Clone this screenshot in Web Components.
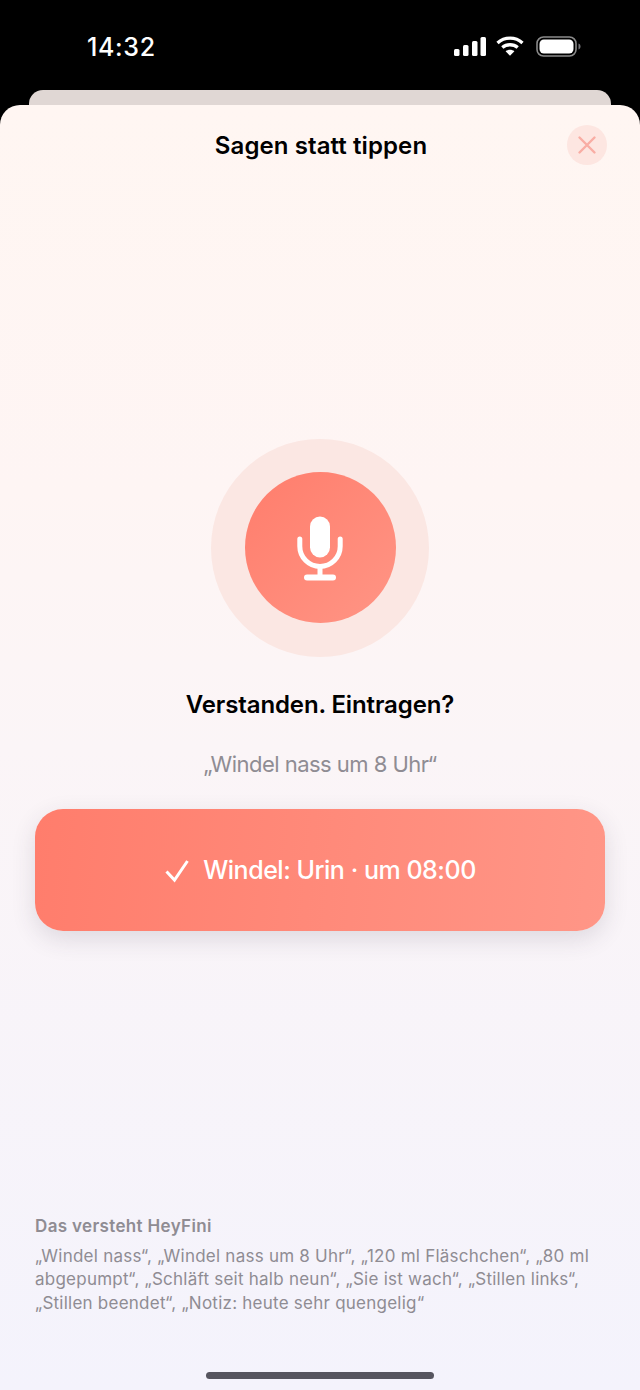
<!DOCTYPE html>
<html lang="de"><head><meta charset="utf-8"><title>Sagen statt tippen</title>
<style>
html,body{margin:0;padding:0;background:#000;}
body{width:640px;height:1390px;overflow:hidden;font-family:Inter,"Liberation Sans",sans-serif;}
</style></head><body>
<voice-screen>
  <status-bar slot="status" time="14:32"></status-bar>
  <voice-sheet slot="sheet" heading="Sagen statt tippen">
    <mic-orb></mic-orb>
    <span slot="prompt">Verstanden. Eintragen?</span>
    <span slot="quote">„Windel nass um 8 Uhr“</span>
    <confirm-card slot="card">Windel: Urin · um 08:00</confirm-card>
    <hint-block slot="hint" title="Das versteht HeyFini">„Windel nass“, „Windel nass um 8 Uhr“, „120 ml Fläschchen“, „80 ml abgepumpt“, „Schläft seit halb neun“, „Sie ist wach“, „Stillen links“, „Stillen beendet“, „Notiz: heute sehr quengelig“</hint-block>
  </voice-sheet>
</voice-screen>
<script>
function def(name, html, init){
  customElements.define(name, class extends HTMLElement{
    constructor(){super();this.attachShadow({mode:'open'}).innerHTML=html;}
    connectedCallback(){ if(init) init(this); }
  });
}
def('voice-screen',`<style>
:host{display:flex;flex-direction:column;width:640px;height:1390px;background:#000}
.peek{height:15px;margin:0 29px;background:#e0d7d4;border-radius:14px 14px 0 0;flex:none}
::slotted([slot=sheet]){flex:1}
</style><slot name="status"></slot><div class="peek"></div><slot name="sheet"></slot>`);

def('status-bar',`<style>
:host{display:flex;align-items:center;justify-content:space-between;height:90px;flex:none;box-sizing:border-box;padding:0 59px 0 87px;color:#fff}
.t{font:500 25px/30px Inter,"Liberation Sans",sans-serif;letter-spacing:.65px;margin-top:3px}
.i{display:flex;align-items:center;margin-top:2px}
svg{display:block}
.w{margin:0 12px 0 10px}
</style><span class="t"></span><div class="i">
<svg width="32" height="19" viewBox="0 0 32 19" fill="#fff"><rect x="0" y="12" width="5.500" height="7" rx="1.500"/><rect x="9" y="8" width="5.500" height="11" rx="1.500"/><rect x="18" y="4" width="5.500" height="15" rx="1.500"/><rect x="26.500" y="0" width="5.500" height="19" rx="1.500"/></svg>
<svg class="w" width="28" height="20" viewBox="0 0 28 20" fill="none" stroke="#fff" stroke-width="3.300"><path d="M1.500 7C8.500 .6 19.500 .6 26.500 7"/><path d="M6.300 11.600c4.400-3.800 11-3.800 15.400 0"/><path d="M14 19.800l-4.400-4.600c2.600-2 6.200-2 8.800 0z" fill="#fff" stroke="none"/></svg>
<svg width="45" height="21" viewBox="0 0 45 21" fill="none"><rect x="1" y="1" width="39" height="19" rx="6.500" stroke="#8a8a8a" stroke-width="1.600"/><rect x="3.500" y="3.500" width="34" height="14" rx="4.400" fill="#fff"/><path d="M42.500 7.500v6c1.300-.4 2-1.600 2-3s-.7-2.600-2-3z" fill="#77767a"/></svg>
</div>`, el=>{el.shadowRoot.querySelector('.t').textContent=el.getAttribute('time');});

def('voice-sheet',`<style>
:host{display:flex;flex-direction:column;box-sizing:border-box;border-radius:20px 20px 0 0;background:linear-gradient(180deg,#fff6f2 0%,#fef5f4 30%,#fbf5f7 50%,#f4f3fc 100%);color:#000;min-height:0}
header{display:grid;grid-template-columns:1fr auto 1fr;align-items:center;padding:20px 33px 0 35px;height:40px}
h1{grid-column:2;margin:2px 0 0;font:600 24px/32px Inter,"Liberation Sans",sans-serif;letter-spacing:.09px;white-space:nowrap}
.x{grid-column:3;justify-self:end;width:40px;height:40px;border-radius:50%;background:#fde6e1;display:flex;align-items:center;justify-content:center}
.main{display:flex;flex-direction:column;align-items:center;padding-top:274px}
.p{margin-top:32px;font:600 24px/32px Inter,"Liberation Sans",sans-serif;letter-spacing:-.12px}
.q{margin-top:29px;font:400 22px/28px Inter,"Liberation Sans",sans-serif;color:#8f8c93;letter-spacing:-.53px}
.c{align-self:stretch;margin:31px 35px 0}
.f{margin-top:auto;padding:0 35px}
.home{width:228px;height:7px;border-radius:4px;background:#56555f;margin:57px auto 11px}
</style>
<header><h1></h1><div class="x"><svg width="20" height="20" viewBox="0 0 20 20" fill="none" stroke="#f9ada4" stroke-width="2.400" stroke-linecap="round"><path d="M2.500 2.500l15 15M17.500 2.500l-15 15"/></svg></div></header>
<div class="main"><slot></slot>
<div class="p"><slot name="prompt"></slot></div>
<div class="q"><slot name="quote"></slot></div>
<div class="c"><slot name="card"></slot></div></div>
<div class="f"><slot name="hint"></slot></div>
<div class="home"></div>`, el=>{
  el.shadowRoot.querySelector('h1').textContent=el.getAttribute('heading');
});

def('mic-orb',`<style>
:host{display:flex;width:218px;height:218px;border-radius:50%;background:#fbe7e3;align-items:center;justify-content:center}
.o{width:151px;height:151px;margin-top:-1px;border-radius:50%;background:linear-gradient(135deg,#ff7d6c,#ff9585);display:flex;align-items:center;justify-content:center}
svg{display:block}
</style><div class="o"><svg width="48" height="66" viewBox="0 0 48 66"><rect x="14" y="1.500" width="20" height="41" rx="10" fill="#fff"/><path d="M3.800 24v7.300a20.200 20.200 0 0 0 40.400 0V24" fill="none" stroke="#fff" stroke-width="5" stroke-linecap="round"/><path d="M24 51v9" stroke="#fff" stroke-width="5"/><rect x="8" y="59.500" width="32" height="6" rx="3" fill="#fff"/></svg></div>`);

def('confirm-card',`<style>
:host{display:flex;align-items:center;justify-content:center;gap:15px;height:122px;border-radius:28px;background:linear-gradient(95deg,#ff7d6c,#ff9687);color:#fff;box-shadow:0 8px 24px rgba(60,50,70,.14);font:500 25px/32px Inter,"Liberation Sans",sans-serif;letter-spacing:-.47px}
svg{display:block;margin-top:2px;overflow:visible}
</style><svg width="24" height="22" viewBox="0 0 24 22" fill="none" stroke="#fff" stroke-width="3"><path d="M2.500 11.500l8 8.500L23.500 1"/></svg><slot></slot>`);

def('hint-block',`<style>
:host{display:block;color:#8f8c93}
b{display:block;font:600 17px/22px Inter,"Liberation Sans",sans-serif;letter-spacing:.35px;margin-bottom:8px}
p{margin:0;font:400 17px/23.500px Inter,"Liberation Sans",sans-serif;letter-spacing:.24px}
</style><b></b><p><slot></slot></p>`, el=>{el.shadowRoot.querySelector('b').textContent=el.getAttribute('title');});
</script>
</body></html>
